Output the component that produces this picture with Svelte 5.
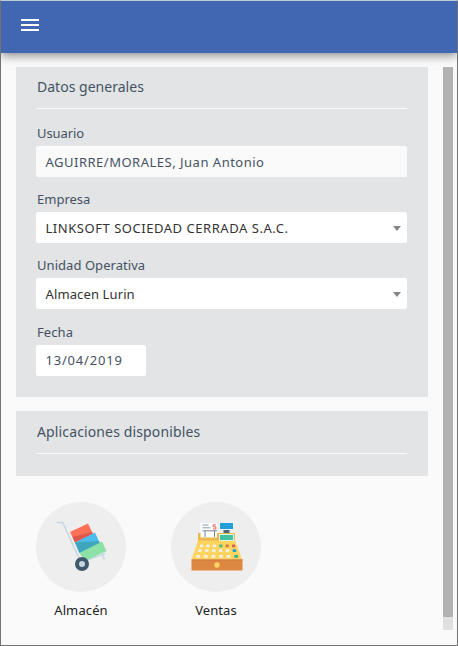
<script>
  const fields = [
    { label: 'Usuario', value: 'AGUIRRE/MORALES, Juan Antonio', kind: 'readonly', ls: [-0.1, 0.5] },
    { label: 'Empresa', value: 'LINKSOFT SOCIEDAD CERRADA S.A.C.', kind: 'select', ls: [0, 0.54] },
    { label: 'Unidad Operativa', value: 'Almacen Lurin', kind: 'select', ls: [0.05, 0.12] },
    { label: 'Fecha', value: '13/04/2019', kind: 'date', ls: [0.1, 0.8] }
  ];
  const keys = [
    { y: 43.4, x: 29, step: 6.4, w: 3.2, colors: ['#f2f0e6', '#f2f0e6', '#f2f0e6', '#43b889', '#cf7944', '#dc614c'] },
    { y: 48.3, x: 27.2, step: 6.9, w: 3.5, colors: ['#f2f0e6', '#f2f0e6', '#f2f0e6', '#f2f0e6', '#f2f0e6', '#239ed9'] },
    { y: 54, x: 25.3, step: 7.6, w: 3.7, colors: ['#f2f0e6', '#f2f0e6', '#f2f0e6', '#f2f0e6', '#f2f0e6', '#32b38b'] }
  ];
</script>

<div class="screen">
  <header>
    <button aria-label="Menú"><span></span><span></span><span></span></button>
  </header>
  <div class="body">
    <main>
      <section class="general">
        <h2 style:letter-spacing="0.02px">Datos generales</h2>
        {#each fields as f}
          <div class="field">
            <div class="label" style:letter-spacing="{f.ls[0]}px">{f.label}</div>
            <div class="control {f.kind}">
              <span style:letter-spacing="{f.ls[1]}px">{f.value}</span>
              {#if f.kind === 'select'}<i></i>{/if}
            </div>
          </div>
        {/each}
      </section>
      <section class="available">
        <h2 style:letter-spacing="0.13px">Aplicaciones disponibles</h2>
      </section>
      <div class="apps">
        <div class="app">
          <div class="circle">
            <svg width="90" height="90" viewBox="0 0 90 90">
              <path d="M20.5 20.5h6.2l17 37" fill="none" stroke="#c7d8e4" stroke-width="1.6" />
              <path d="M47 59.500l22-8M66 53l2.500 4.500" fill="none" stroke="#c7d8e4" stroke-width="1.6" />
              <path d="M34 30L52 21.500l5 10.500L39 40.500z" fill="#ff7058" />
              <path d="M36.500 35l19.500-5 1 2L39 40.500z" fill="#e2574c" />
              <path d="M39 40.500L59 30.500l5 11L43.500 51z" fill="#4dbbeb" />
              <path d="M39 40.500l24-1.500 1 2.500L43.500 51z" fill="#3da6bd" />
              <path d="M43.500 51L66 39.500l4.500 9.500L49 59z" fill="#8ce1a6" />
              <circle cx="46" cy="62" r="5" fill="#c7d8e4" stroke="#415a6b" stroke-width="4" />
            </svg>
          </div>
          <div class="name" style:letter-spacing="0.12px">Almacén</div>
        </div>
        <div class="app">
          <div class="circle">
            <svg width="90" height="90" viewBox="0 0 90 90">
              <path d="M27 31h37v10H27z" fill="#e9b94d" />
              <path d="M27 38.500h37l7 19H20.500z" fill="#fcd45e" />
              <path d="M29.500 21H46v14.500H29.500z" fill="#fff" />
              <path d="M31.500 23h6M31.500 25.800h8" stroke="#8d9ba5" />
              <path d="M44.800 22.800h-2.600v2h2.600v2.200h-2.800" fill="none" stroke="#ee6053" />
              <path d="M31.500 28.800H46M34 29v6M43.500 29v6" fill="none" stroke="#75828c" />
              <path d="M48 20.500h14.500v7H48z" fill="#eef7fc" />
              <path d="M49 21h13v6H49z" fill="#239ed9" />
              <path d="M52.500 28h6v3h-6z" fill="#4c6978" />
              <path d="M48 32h15v7H48z" fill="#e3f3e8" />
              <path d="M49 33h13v5H49z" fill="#40c3a0" />
              {#each keys as row}
                {#each row.colors as color, i}
                  <rect x={row.x + i * row.step} y={row.y - 1} width={row.w} height="2.8" rx=".5" fill={color} />
                {/each}
              {/each}
              <path d="M20.500 57.500H71.500v11h-51z" fill="#de8741" />
              <path d="M20.500 57.500H71.500v1h-51z" fill="#cc7b3d" />
              <circle cx="46" cy="63" r="2.700" fill="#ffd563" />
            </svg>
          </div>
          <div class="name" style:letter-spacing="0.1px">Ventas</div>
        </div>
      </div>
    </main>
    <div class="track"><div class="thumb"></div></div>
  </div>
</div>

<style>
  :global(body) { margin: 0; }
  .screen {
    box-sizing: border-box;
    width: 458px;
    height: 646px;
    overflow: hidden;
    background: #fafafa;
    border: 1px solid #737373;
    border-top-color: #c3cdd7;
    font-family: "Noto Sans", "Open Sans", sans-serif;
    font-size: 13px;
    color: #465262;
  }
  header {
    box-sizing: border-box;
    height: 52px;
    padding: 18px 0 0 20px;
    background: #4267b2;
    box-shadow: 0 2px 10px rgba(0, 0, 0, .5);
  }
  button { display: flex; flex-direction: column; gap: 3px; width: 18px; padding: 0; border: 0; background: none; }
  button span { height: 2px; width: 18px; background: #fff; }
  .body { display: flex; justify-content: space-between; padding: 14px 4px 0 15px; }
  main { width: 412px; }
  section { box-sizing: border-box; padding: 0 21px 0 20px; background: #e2e4e6; }
  .general { height: 330px; margin-bottom: 14px; }
  .available { height: 65px; }
  h2 {
    box-sizing: border-box;
    height: 42px;
    margin: 0 0 14px;
    padding: 9px 0 0 1px;
    border-bottom: 1px solid #fafafa;
    font-size: 14px;
    line-height: 22px;
    font-weight: 400;
    white-space: nowrap;
  }
  .available h2 { height: 43px; padding-top: 10px; }
  .field { height: 66.2px; }
  .label { height: 23px; padding-left: 1px; line-height: 21px; white-space: nowrap; }
  .control {
    box-sizing: border-box;
    display: flex;
    align-items: center;
    justify-content: space-between;
    height: 31px;
    padding: 0 6px 0 9.5px;
    border-radius: 2px;
    background: #fff;
    white-space: nowrap;
  }
  .readonly { background: #fafafa; }
  .select { color: #333; }
  .date { width: 110px; }
  i { margin-top: 1px; border: 4px solid transparent; border-top: 5px solid #858585; border-bottom: 0; }
  .apps { display: flex; gap: 45px; padding: 26px 0 0 20px; }
  .app { width: 90px; text-align: center; color: #222; }
  .circle { width: 90px; height: 90px; border-radius: 50%; background: #eee; }
  svg { display: block; }
  .name { margin-top: 8px; line-height: 20px; }
  .track { width: 10px; height: 563px; background: #e0e0e0; }
  .thumb { height: 550px; background: #b2b2b2; }
</style>
